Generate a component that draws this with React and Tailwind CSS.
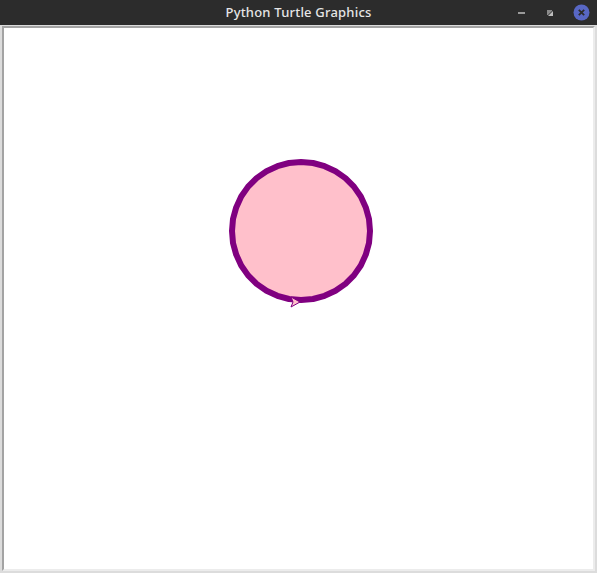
import React from 'react';

// Turtle canvas window: title bar plus a framed white canvas with one filled circle
function TitleBar() {
  return (
    <div className="relative h-[26px] bg-[#2c2c2c] flex items-center justify-center">
      <span className="text-[13px] font-medium text-[#e6e6e6] tracking-[0.2px]" style={{ fontFamily: '"Noto Sans", "DejaVu Sans", sans-serif' }}>
        Python Turtle Graphics
      </span>
      <div className="absolute right-[7px] top-0 h-full flex items-center gap-[17px]">
        <div className="w-[12px] h-[12px] flex items-center justify-center">
          <div className="w-[7px] h-[2px] bg-[#9a9a9a]" />
        </div>
        <svg width="12" height="12" viewBox="0 0 12 12">
          <path d="M3 3 L8 3 L8 4 L4 8 L3 8 Z" fill="#8a8a8a" />
          <path d="M9 4 L9 9 L4 9 Z" fill="#bdbdbd" />
        </svg>
        <svg width="17" height="17" viewBox="0 0 17 17">
          <circle cx="8.5" cy="8.5" r="8" fill="#5867c4" />
          <path d="M5.8 5.8 L11.2 11.2 M11.2 5.8 L5.8 11.2" stroke="#2c2c2c" strokeWidth="1.8" />
        </svg>
      </div>
    </div>
  );
}

function Canvas() {
  // turtle draws the circle as a polygon; approximate with many segments
  const cx = 302;
  const cy = 231;
  const r = 69;
  const n = 36;
  const pts = [];
  for (let i = 0; i <= n; i++) {
    const a = Math.PI / 2 - (i / n) * 2 * Math.PI;
    pts.push(`${(cx + r * Math.cos(a) - 5).toFixed(1)},${(cy + r * Math.sin(a) - 28).toFixed(1)}`);
  }
  return (
    <div className="flex-1 border-t-2 border-l-2 border-[#a3a3a3] border-r-2 border-b-2 border-r-[#ececec] border-b-[#ececec] bg-white">
      <svg width="589" height="541" className="block">
        <polygon points={pts.join(' ')} fill="#ffc0cb" stroke="#800080" strokeWidth="6" strokeLinejoin="round" />
        <path d="M287 269 L296 274 L287 279 L289 274 Z" fill="#ffc0cb" stroke="#800080" strokeWidth="1" />
      </svg>
    </div>
  );
}

export default function App() {
  return (
    <div className="w-[597px] h-[573px] bg-[#dcdcdc] flex flex-col overflow-hidden">
      <TitleBar />
      <div className="flex-1 flex px-[2px] pt-[1px] pb-[2px]">
        <Canvas />
      </div>
    </div>
  );
}
